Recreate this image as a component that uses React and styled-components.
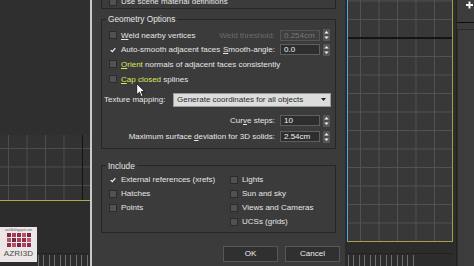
import React from "react";
import styled, { createGlobalStyle } from "styled-components";

const GlobalStyle = createGlobalStyle`
  html, body { margin: 0; padding: 0; background: #2b2b2b; }
  body {
    width: 474px;
    height: 266px;
    overflow: hidden;
    font-family: "Liberation Sans", Arial, sans-serif;
    font-size: 8px;
    color: #e6e6e6;
  }
`;

const Screen = styled.div`
  position: relative;
  display: grid;
  grid-template-columns: 90px 2px 253px 2px 106px 3px 18px;
  height: 266px;
  overflow: hidden;
`;

const Gutter = styled.div`
  background: ${(p) => p.$color || "#2b2b2b"};
`;

/* ---------- viewports ---------- */

const SideView = styled.div`
  display: flex;
  flex-direction: column;
  background: #2f2f2f;
`;

const Blank = styled.div`
  height: 135px;
`;

const SideGrid = styled.div`
  flex: 1;
  background-color: #323232;
  background-image:
    linear-gradient(to right, transparent 82px, #141414 82px, #141414 83px, transparent 83px),
    linear-gradient(to right, #4d4d4d 1px, transparent 1px),
    linear-gradient(to bottom, #4d4d4d 1px, transparent 1px);
  background-size: 100% 100%, 18.5px 18.5px, 18.5px 18.5px;
  background-position: 0 0, 8px 0, 0 13px;
  background-repeat: no-repeat, repeat, repeat;
`;

const YellowRule = styled.div`
  height: 1px;
  background: #b3a64a;
`;

const MainView = styled.div`
  display: flex;
  flex-direction: column;
`;

const Viewport = styled.div`
  box-sizing: border-box;
  height: 242px;
  border-left: 1px solid #4fa7e2;
  border-right: 1px solid #aa9f48;
  border-bottom: 1px solid #aa9f48;
  background-color: #383838;
  background-image:
    linear-gradient(to bottom, transparent 37.5px, #141414 37.5px, #141414 39px, transparent 39px),
    linear-gradient(to right, #525252 1px, transparent 1px),
    linear-gradient(to bottom, #525252 1px, transparent 1px);
  background-size: 100% 100%, 18.5px 18.5px, 18.5px 18.5px;
  background-position: 0 0, 12px 0, 0 0.5px;
  background-repeat: no-repeat, repeat, repeat;
`;

const Timeline = styled.div`
  flex: 1;
  display: flex;
  flex-direction: column;
  justify-content: flex-end;
  background: #2c2c2c;
`;

const TrackLine = styled.div`
  height: 1px;
  margin-bottom: 1px;
  background: #222;
`;

const Ticks = styled.div`
  height: 11px;
  margin-left: ${(p) => p.$from}px;
  width: ${(p) => p.$width}px;
  background-image: repeating-linear-gradient(
    to right,
    #6e6e6e 0 1px,
    transparent 1px 5.4px
  );
`;

/* ---------- command panel ---------- */

const CommandPanel = styled.div`
  display: flex;
  flex-direction: column;
  background: #3c3c3c;
  border-left: 1px solid #232323;
`;

const PanelTabs = styled.div`
  height: 21px;
  border-bottom: 1px solid #0f0f0f;
  display: flex;
  justify-content: flex-end;
  padding-top: 1px;
`;

const PanelBody = styled.div`
  flex: 1;
  margin-top: 6px;
  border-top: 1px solid #2a2a2a;
  border-left: 1px solid #2a2a2a;
`;

/* ---------- dialog ---------- */

const Dialog = styled.div`
  display: flex;
  flex-direction: column;
  background: #3b3b3b;
  overflow: hidden;
`;

const TopGroup = styled.div`
  box-sizing: border-box;
  height: 9px;
  margin: 0 9px;
  padding: 0 5px 2px 7px;
  border: 1px solid #262626;
  border-top: none;
  display: flex;
  flex-direction: column;
  justify-content: flex-end;
  overflow: hidden;
`;

const Group = styled.fieldset`
  margin: ${(p) => p.$top}px 9px 0;
  padding: ${(p) => p.$padTop}px 5px ${(p) => p.$padBottom}px 7px;
  border: 1px solid #262626;
  min-width: 0;
`;

const Legend = styled.legend`
  padding: 0 2px;
  margin-left: -3px;
  line-height: 10px;
  font-size: 8.3px;
  color: #e6e6e6;
`;

const Row = styled.div`
  display: flex;
  align-items: center;
  height: ${(p) => p.$h || 14.6}px;
  margin-top: ${(p) => p.$mt || 0}px;
  white-space: nowrap;
`;

const Label = styled.span`
  color: ${(p) => (p.$hl ? "#dce65a" : p.$dim ? "#6c6c6c" : "#e6e6e6")};
  margin-left: ${(p) => p.$ml || 0}px;
  u {
    text-decoration-thickness: 1px;
    text-underline-offset: 1px;
  }
`;

const Spacer = styled.div`
  flex: 1;
`;

const Box = styled.span`
  box-sizing: border-box;
  width: 8px;
  height: 8px;
  margin-right: 4px;
  flex: none;
  display: inline-flex;
  align-items: center;
  justify-content: center;
  background: ${(p) => (p.$checked ? "#3a3a3a" : "#515151")};
  border: 1px solid ${(p) => (p.$checked ? "#3a3a3a" : "#2b2b2b")};
`;

const Field = styled.span`
  box-sizing: border-box;
  width: 40px;
  height: 11px;
  margin-left: 5px;
  padding-left: 3px;
  display: inline-flex;
  align-items: center;
  background: ${(p) => (p.$disabled ? "#3e3e3e" : "#2e2e2e")};
  border: 1px solid ${(p) => (p.$disabled ? "#555" : "#5e5e5e")};
  color: ${(p) => (p.$disabled ? "#777" : "#f2f2f2")};
`;

const SpinBox = styled.span`
  display: inline-flex;
  margin-left: 3px;
`;

const Select = styled.div`
  box-sizing: border-box;
  width: 158px;
  height: 14px;
  margin-left: auto;
  margin-right: -1px;
  padding: 0 4px 0 3px;
  display: flex;
  align-items: center;
  justify-content: space-between;
  background: #dcdcdc;
  border: 1px solid #9a9a9a;
  color: #2a2a2a;
`;

const Columns = styled.div`
  display: grid;
  grid-template-columns: 121px 1fr;
`;

const Column = styled.div`
  display: flex;
  flex-direction: column;
`;

const ButtonRow = styled.div`
  display: flex;
  justify-content: flex-end;
  gap: 7px;
  margin-top: 13px;
  padding-right: 5px;
`;

const Button = styled.div`
  box-sizing: border-box;
  width: 55px;
  height: 16px;
  display: flex;
  align-items: center;
  justify-content: center;
  background: #303030;
  border: 1px solid #575757;
  color: #ededed;
`;

/* ---------- overlays ---------- */

const Cursor = styled.svg`
  position: absolute;
  left: 136px;
  top: 83px;
`;

const Watermark = styled.div`
  position: absolute;
  left: 0;
  top: 227px;
  width: 37px;
  height: 35px;
  background: #ece6e6;
  display: flex;
  flex-direction: column;
  align-items: center;
  padding-top: 1px;
  box-sizing: border-box;
`;

const TinyUrl = styled.div`
  font-size: 3px;
  line-height: 4px;
  color: #555;
`;

const Mosaic = styled.div`
  display: grid;
  grid-template-columns: repeat(5, 4px);
  gap: 1px;
  margin-top: 1px;
`;

const Tile = styled.span`
  width: 4px;
  height: 4px;
  background: ${(p) => p.$c};
`;

const Brand = styled.div`
  font-size: 8px;
  line-height: 9px;
  margin-top: 2px;
  color: #4a4a4a;
  letter-spacing: 0.2px;
`;

const Check = () => (
  <svg width="7" height="6" viewBox="0 0 7 6">
    <path d="M0.8 3.1 L2.7 5 L6.2 0.9" fill="none" stroke="#f4f4f4" strokeWidth="1.4" />
  </svg>
);

const CheckBox = ({ checked }) => <Box $checked={checked}>{checked && <Check />}</Box>;

const Spinner = () => (
  <SpinBox>
    <svg width="7" height="12" viewBox="0 0 7 12">
      <rect x="0" y="0" width="7" height="12" rx="1" fill="#575757" />
      <path d="M1.3 4.6 L3.5 2 L5.7 4.6 Z" fill="#f0f0f0" />
      <path d="M1.3 7.4 L3.5 10 L5.7 7.4 Z" fill="#f0f0f0" />
      <rect x="1" y="5.6" width="5" height="0.8" fill="#3a3a3a" />
    </svg>
  </SpinBox>
);

const mosaicColors = [
  "#7a2a4a", "#b43a4a", "#8a3060", "#c24a55", "#6a2a55",
  "#c2505a", "#6e2850", "#b0404d", "#82305c", "#c85560",
  "#8c3058", "#c04a52", "#74285a", "#b8424e", "#8a2e5c",
];

export default function App() {
  return (
    <>
      <GlobalStyle />
      <Screen>
        <SideView>
          <Blank />
          <SideGrid />
          <YellowRule />
          <Timeline>
            <TrackLine />
            <Ticks $from={38} $width={52} />
          </Timeline>
        </SideView>

        <Gutter $color="#c9c9c9" />

        <Dialog>
          <TopGroup>
            <Row $h={14}>
              <CheckBox />
              <Label>Use scene material definitions</Label>
            </Row>
          </TopGroup>

          <Group $top={5} $padTop={4} $padBottom={4}>
            <Legend>Geometry Options</Legend>
            <Row>
              <CheckBox />
              <Label>
                <u>W</u>eld nearby vertices
              </Label>
              <Spacer />
              <Label $dim>Weld threshold:</Label>
              <Field $disabled>0.254cm</Field>
              <Spinner />
            </Row>
            <Row>
              <CheckBox checked />
              <Label>Auto-smooth adjacent faces</Label>
              <Spacer />
              <Label>
                <u>S</u>mooth-angle:
              </Label>
              <Field>0.0</Field>
              <Spinner />
            </Row>
            <Row>
              <CheckBox />
              <Label $hl>
                <u>O</u>rient
              </Label>
              <Label>&nbsp;normals of adjacent faces consistently</Label>
            </Row>
            <Row>
              <CheckBox />
              <Label $hl>
                <u>C</u>ap closed
              </Label>
              <Label>&nbsp;splines</Label>
            </Row>
            <Row $h={14} $mt={6.6}>
              <Label $ml={-5}>Texture mapping:</Label>
              <Select>
                <span>Generate coordinates for all objects</span>
                <svg width="5" height="3" viewBox="0 0 5 3">
                  <path d="M0 0 L5 0 L2.5 3 Z" fill="#222" />
                </svg>
              </Select>
            </Row>
            <Row $h={14} $mt={7}>
              <Spacer />
              <Label>
                Cur<u>v</u>e steps:
              </Label>
              <Field>10</Field>
              <Spinner />
            </Row>
            <Row $h={14} $mt={2}>
              <Spacer />
              <Label>
                Maximum surface <u>d</u>eviation for 3D solids:
              </Label>
              <Field>2.54cm</Field>
              <Spinner />
            </Row>
          </Group>

          <Group $top={12} $padTop={2} $padBottom={3}>
            <Legend>Include</Legend>
            <Columns>
              <Column>
                <Row $h={14}>
                  <CheckBox checked />
                  <Label>External references (xrefs)</Label>
                </Row>
                <Row $h={14}>
                  <CheckBox />
                  <Label>Hatches</Label>
                </Row>
                <Row $h={14}>
                  <CheckBox />
                  <Label>Points</Label>
                </Row>
              </Column>
              <Column>
                <Row $h={14}>
                  <CheckBox />
                  <Label>Lights</Label>
                </Row>
                <Row $h={14}>
                  <CheckBox />
                  <Label>Sun and sky</Label>
                </Row>
                <Row $h={14}>
                  <CheckBox />
                  <Label>Views and Cameras</Label>
                </Row>
                <Row $h={14}>
                  <CheckBox />
                  <Label>UCSs (grids)</Label>
                </Row>
              </Column>
            </Columns>
          </Group>

          <ButtonRow>
            <Button>OK</Button>
            <Button>Cancel</Button>
          </ButtonRow>
        </Dialog>

        <Gutter />

        <MainView>
          <Viewport />
          <Timeline>
            <TrackLine />
            <Ticks $from={1} $width={70} />
          </Timeline>
        </MainView>

        <Gutter $color="#2d2d2d" />

        <CommandPanel>
          <PanelTabs>
            <svg width="9" height="8" viewBox="0 0 9 8">
              <path d="M1 4 H8 M4.5 0.5 V7.5" stroke="#f2f2f2" strokeWidth="2" />
            </svg>
          </PanelTabs>
          <PanelBody />
        </CommandPanel>

        <Cursor width="10" height="15" viewBox="0 0 9 14">
          <path
            d="M0.5 0.5 L0.5 11 L3 8.6 L4.8 12.8 L6.4 12.1 L4.7 8 L8 8 Z"
            fill="#ffffff"
            stroke="#111"
            strokeWidth="0.8"
          />
        </Cursor>

        <Watermark>
          <TinyUrl>azri3d.blogspot.com</TinyUrl>
          <Mosaic>
            {mosaicColors.map((c, i) => (
              <Tile key={i} $c={c} />
            ))}
          </Mosaic>
          <Brand>AZRI3D</Brand>
        </Watermark>
      </Screen>
    </>
  );
}
